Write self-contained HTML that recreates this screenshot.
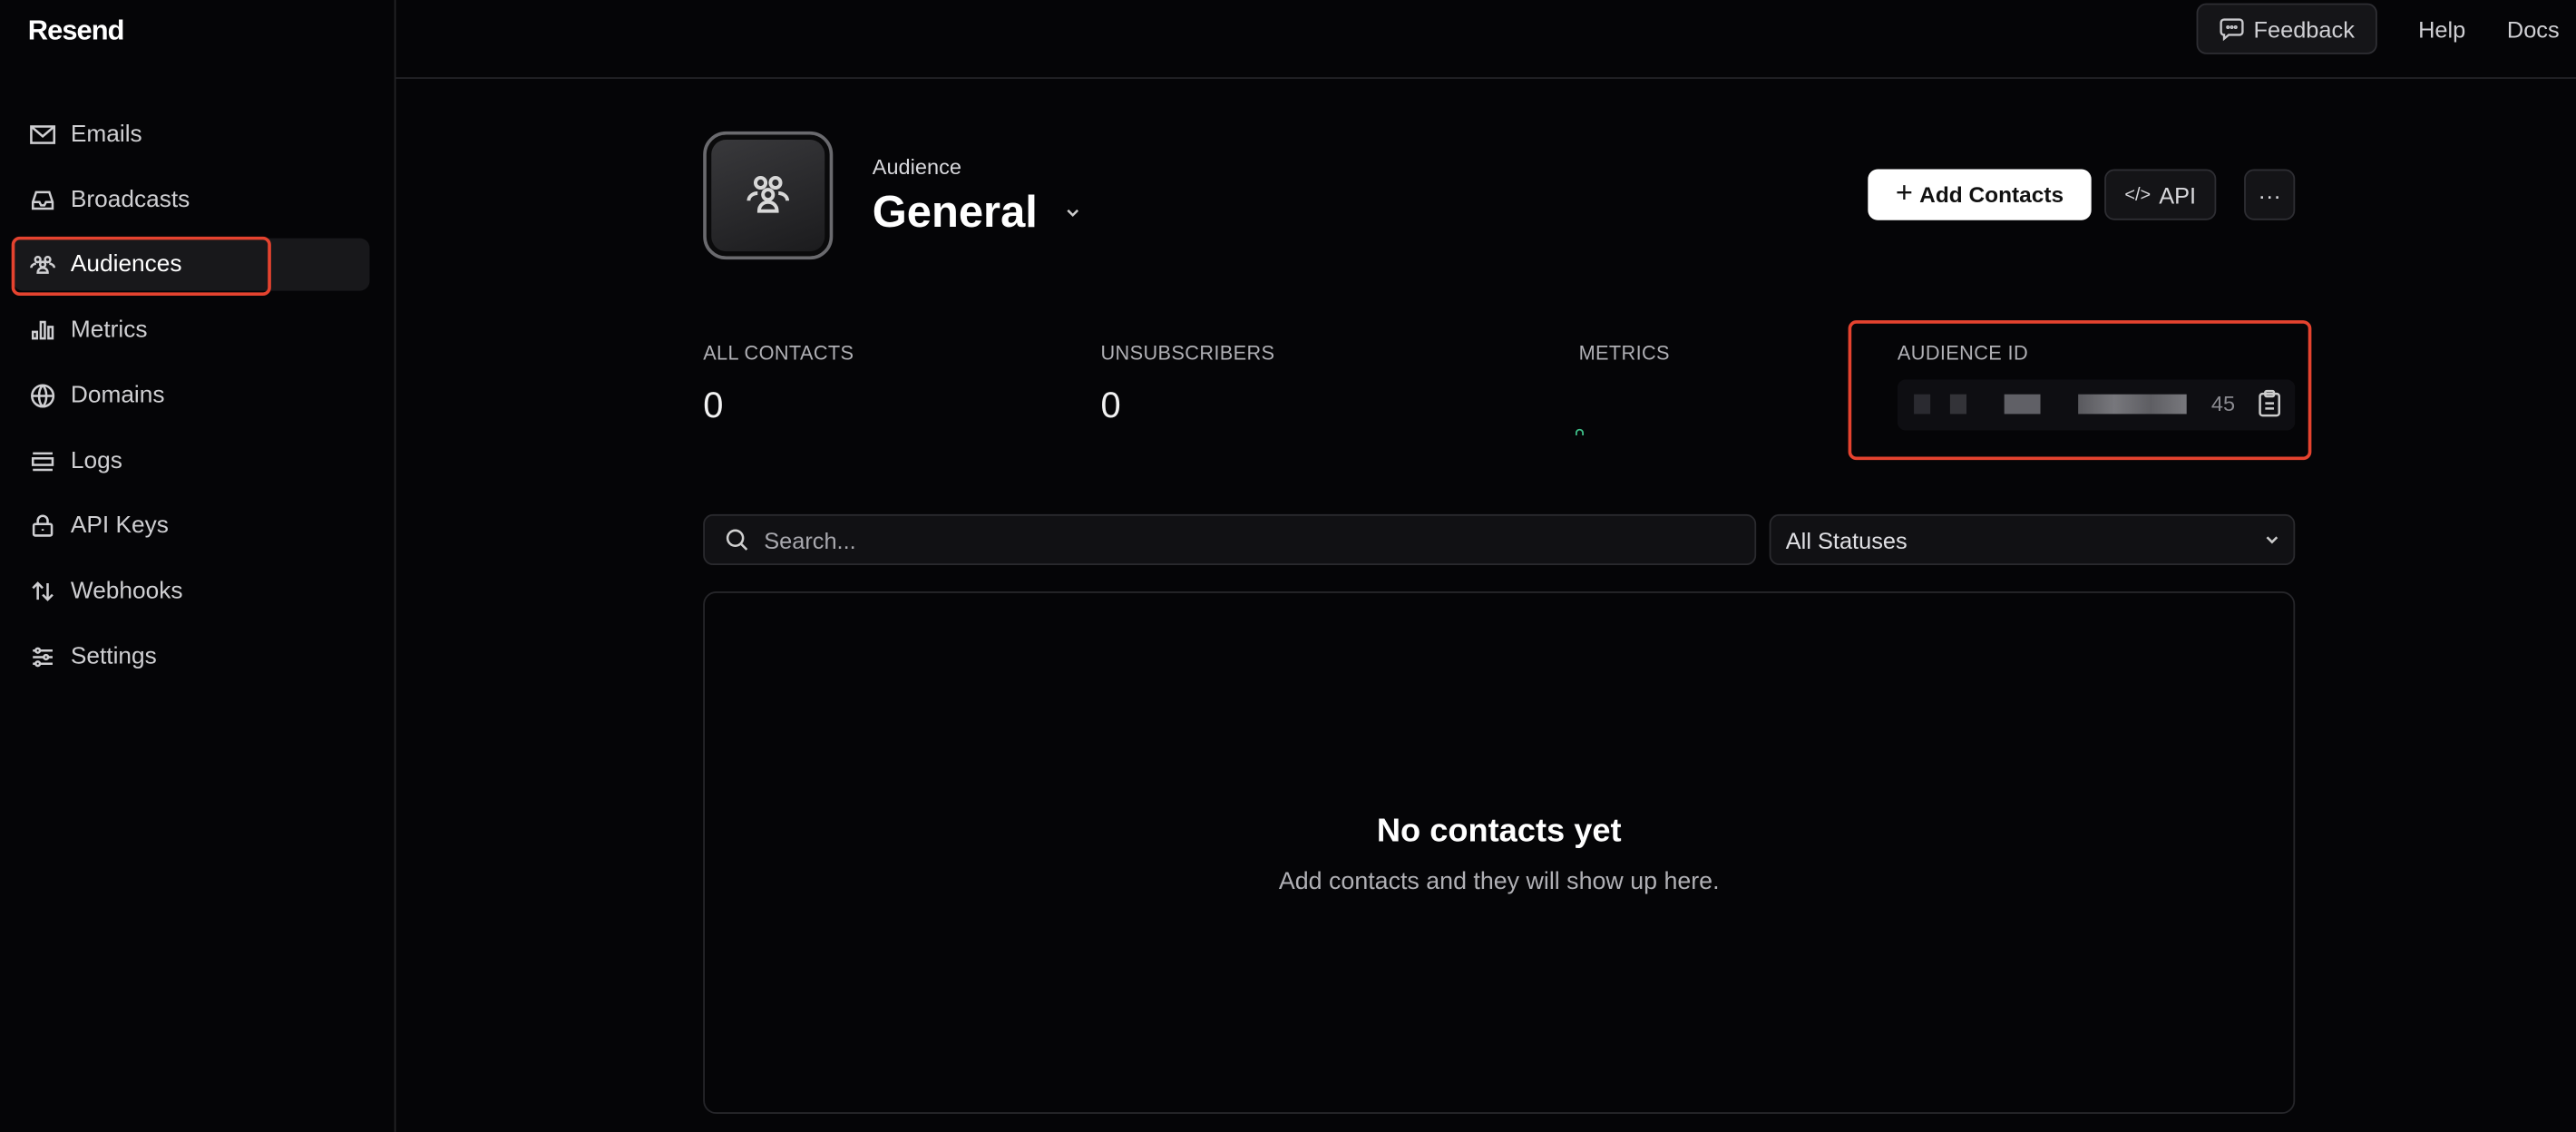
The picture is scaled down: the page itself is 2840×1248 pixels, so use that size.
<!DOCTYPE html>
<html><head><meta charset="utf-8"><style>
*{box-sizing:border-box;margin:0;padding:0}
html,body{width:2840px;height:1248px;overflow:hidden;background:#050507}
#r{width:1568px;height:689px;position:relative;transform:scale(1.8112);transform-origin:0 0;font-family:"Liberation Sans",sans-serif;color:#ededed}
.a{position:absolute}
.nav{position:absolute;left:18px;display:flex;align-items:center;font-size:14.5px;color:#cfcfd2}
.nav svg{width:16px;height:16px;margin-right:9px;stroke:#cfcfd2;fill:none;stroke-width:1.4}
.lbl{position:absolute;top:208px;font-size:12px;color:#b0b0b5;letter-spacing:.2px}
.val{position:absolute;top:234px;font-size:22px;color:#f2f2f2}
.btn{position:absolute;top:103px;height:31px;border-radius:6px;display:flex;align-items:center;justify-content:center;font-size:14px}
</style></head><body><div id="r">
<div class="a" style="left:0;top:0;width:241px;height:689px;border-right:1px solid #222226"></div>
<div class="a" style="left:241px;top:47px;width:1327px;height:1px;background:#222226"></div>
<div class="a" style="left:17px;top:9px;font-size:17px;font-weight:bold;color:#fff;letter-spacing:-.5px">Resend</div>

<div class="a" style="left:8px;top:145px;width:217px;height:32px;background:#18181b;border-radius:6px"></div>
<div class="a" style="left:7px;top:144px;width:158px;height:36px;border:2px solid #e5432f;border-radius:5px"></div>

<div class="nav" style="top:74px"><svg viewBox="0 0 16 16"><rect x="1" y="3" width="14" height="10"/><path d="M1 3l7 6 7-6"/></svg>Emails</div>
<div class="nav" style="top:114px"><svg viewBox="0 0 16 16"><path d="M2 9l2-6h8l2 6v4H2z M2 9h4l1 2h2l1-2h4"/></svg>Broadcasts</div>
<div class="nav" style="top:153px;color:#fff"><svg viewBox="0 0 16 16"><circle cx="5" cy="5" r="1.6"/><circle cx="11" cy="5" r="1.6"/><circle cx="8" cy="8" r="1.6"/><path d="M5 13c0-2 1.5-3 3-3s3 1 3 3z M1 10c0-1.5 1.5-2.5 3-2.5 M15 10c0-1.5-1.5-2.5-3-2.5"/></svg>Audiences</div>
<div class="nav" style="top:193px"><svg viewBox="0 0 16 16"><rect x="2" y="9" width="2.5" height="4"/><rect x="6.8" y="3" width="2.5" height="10"/><rect x="11.5" y="6" width="2.5" height="7"/></svg>Metrics</div>
<div class="nav" style="top:233px"><svg viewBox="0 0 16 16"><circle cx="8" cy="8" r="6.5"/><path d="M1.5 8h13 M8 1.5c-3 3-3 10 0 13 M8 1.5c3 3 3 10 0 13"/></svg>Domains</div>
<div class="nav" style="top:273px"><svg viewBox="0 0 16 16"><path d="M2 3h12 M2 13h12"/><rect x="2" y="6" width="12" height="4"/></svg>Logs</div>
<div class="nav" style="top:312px"><svg viewBox="0 0 16 16"><rect x="2.5" y="7" width="11" height="7" rx="1"/><path d="M5 7V5a3 3 0 016 0v2 M8 10v1"/></svg>API Keys</div>
<div class="nav" style="top:352px"><svg viewBox="0 0 16 16"><path d="M5 13V3 M2 6l3-3 3 3 M11 3v10 M8 10l3 3 3-3"/></svg>Webhooks</div>
<div class="nav" style="top:392px"><svg viewBox="0 0 16 16"><path d="M2 4h12 M2 8h12 M2 12h12"/><circle cx="5" cy="4" r="1.3" fill="#050507"/><circle cx="10" cy="8" r="1.3" fill="#050507"/><circle cx="5" cy="12" r="1.3" fill="#050507"/></svg>Settings</div>

<div class="a" style="left:1337px;top:2px;width:110px;height:31px;border:1px solid #2e2e33;background:#151518;border-radius:6px;display:flex;align-items:center;justify-content:center;font-size:14px;color:#d0d0d4"><svg width="15" height="15" viewBox="0 0 16 16" style="margin-right:6px" fill="none" stroke="#c8c8cc" stroke-width="1.4"><path d="M3 2h10a2 2 0 012 2v6a2 2 0 01-2 2H6l-3 2.5V12a2 2 0 01-2-2V4a2 2 0 012-2z"/><circle cx="5.5" cy="7" r=".5"/><circle cx="8" cy="7" r=".5"/><circle cx="10.5" cy="7" r=".5"/></svg>Feedback</div>
<div class="a" style="left:1472px;top:10px;font-size:14px;color:#d0d0d4">Help</div>
<div class="a" style="left:1526px;top:10px;font-size:14px;color:#d0d0d4">Docs</div>

<div class="a" style="left:428px;top:80px;width:79px;height:78px;border:2px solid #6a6a6e;border-radius:14px;background:linear-gradient(160deg,#3a3a3d,#1a1a1c);box-shadow:inset 0 0 0 3px #0a0a0b"></div>
<svg class="a" style="left:453px;top:104px" width="29" height="29" viewBox="0 0 16 16" fill="none" stroke="#d8d8d8" stroke-width="1.2"><circle cx="5.5" cy="4" r="1.7"/><circle cx="10.5" cy="4" r="1.7"/><circle cx="8" cy="8" r="1.7"/><path d="M5 13.5c0-2 1.5-3 3-3s3 1 3 3z M1.5 10c0-1.5 1.5-2.5 3-2.5 M14.5 10c0-1.5-1.5-2.5-3-2.5"/></svg>
<div class="a" style="left:531px;top:94px;font-size:13px;color:#d8d8dc">Audience</div>
<div class="a" style="left:531px;top:114px;font-size:27px;font-weight:bold;color:#fff">General</div>
<svg class="a" style="left:648px;top:126px" width="10" height="8" viewBox="0 0 10 8" fill="none" stroke="#ccc" stroke-width="1.4"><path d="M2 2l3 3 3-3"/></svg>

<div class="btn" style="left:1137px;width:136px;background:#fff;color:#111;font-weight:bold;font-size:13.5px"><span style="font-size:18px;font-weight:normal;margin-right:4px;margin-top:-2px">+</span>Add Contacts</div>
<div class="btn" style="left:1281px;width:68px;background:#141417;border:1px solid #2e2e33;color:#d8d8dc"><span style="font-size:11px;margin-right:5px">&lt;/&gt;</span>API</div>
<div class="btn" style="left:1366px;width:31px;background:#141417;border:1px solid #2e2e33;color:#d8d8dc">···</div>

<div class="lbl" style="left:428px">ALL CONTACTS</div><div class="val" style="left:428px">0</div>
<div class="lbl" style="left:670px">UNSUBSCRIBERS</div><div class="val" style="left:670px">0</div>
<div class="lbl" style="left:961px">METRICS</div>
<div class="a" style="left:959px;top:261px;width:5px;height:4px;border-radius:3px 3px 0 0;border:1px solid #3fbf88;border-bottom:none"></div>
<div class="lbl" style="left:1155px">AUDIENCE ID</div>
<div class="a" style="left:1155px;top:231px;width:242px;height:31px;background:#0e0e12;border-radius:5px"></div>
<div class="a" style="left:1165px;top:240px;width:10px;height:12px;background:#2a2a30"></div>
<div class="a" style="left:1187px;top:240px;width:10px;height:12px;background:#333338"></div>
<div class="a" style="left:1220px;top:240px;width:22px;height:12px;background:#606066"></div>
<div class="a" style="left:1265px;top:240px;width:66px;height:12px;background:linear-gradient(90deg,#59595e,#77777c,#5e5e63,#78787d)"></div>
<div class="a" style="left:1346px;top:238px;font-size:13px;color:#8a8a90">45</div>
<svg class="a" style="left:1374px;top:237px" width="15" height="17" viewBox="0 0 14 16" fill="none" stroke="#ccc" stroke-width="1.3"><rect x="1.5" y="2.5" width="11" height="12.5" rx="1.5"/><rect x="4.5" y="1" width="5" height="3" rx=".8"/><path d="M4.5 8h5 M4.5 11h5"/></svg>
<div class="a" style="left:1125px;top:195px;width:282px;height:85px;border:2px solid #e5432f;border-radius:5px"></div>

<div class="a" style="left:428px;top:313px;width:641px;height:31px;background:#111114;border:1px solid #2a2a2e;border-radius:6px;display:flex;align-items:center;padding-left:12px;font-size:14px;color:#a8a8ae"><svg width="15" height="15" viewBox="0 0 16 16" fill="none" stroke="#d0d0d0" stroke-width="1.5" style="margin-right:9px"><circle cx="7" cy="7" r="5"/><path d="M11 11l3.5 3.5"/></svg>Search...</div>
<div class="a" style="left:1077px;top:313px;width:320px;height:31px;background:#111114;border:1px solid #2a2a2e;border-radius:6px;display:flex;align-items:center;padding-left:9px;font-size:14px;color:#e0e0e4">All Statuses<svg class="a" style="right:8px;top:11px" width="10" height="8" viewBox="0 0 10 8" fill="none" stroke="#ccc" stroke-width="1.4"><path d="M2 2l3 3 3-3"/></svg></div>

<div class="a" style="left:428px;top:360px;width:969px;height:318px;border:1px solid #26262a;border-radius:8px"></div>
<div class="a" style="left:428px;top:495px;width:969px;text-align:center;font-size:20px;font-weight:bold;color:#fff">No contacts yet</div>
<div class="a" style="left:428px;top:529px;width:969px;text-align:center;font-size:14.8px;color:#b0b0b5">Add contacts and they will show up here.</div>
</div></body></html>
